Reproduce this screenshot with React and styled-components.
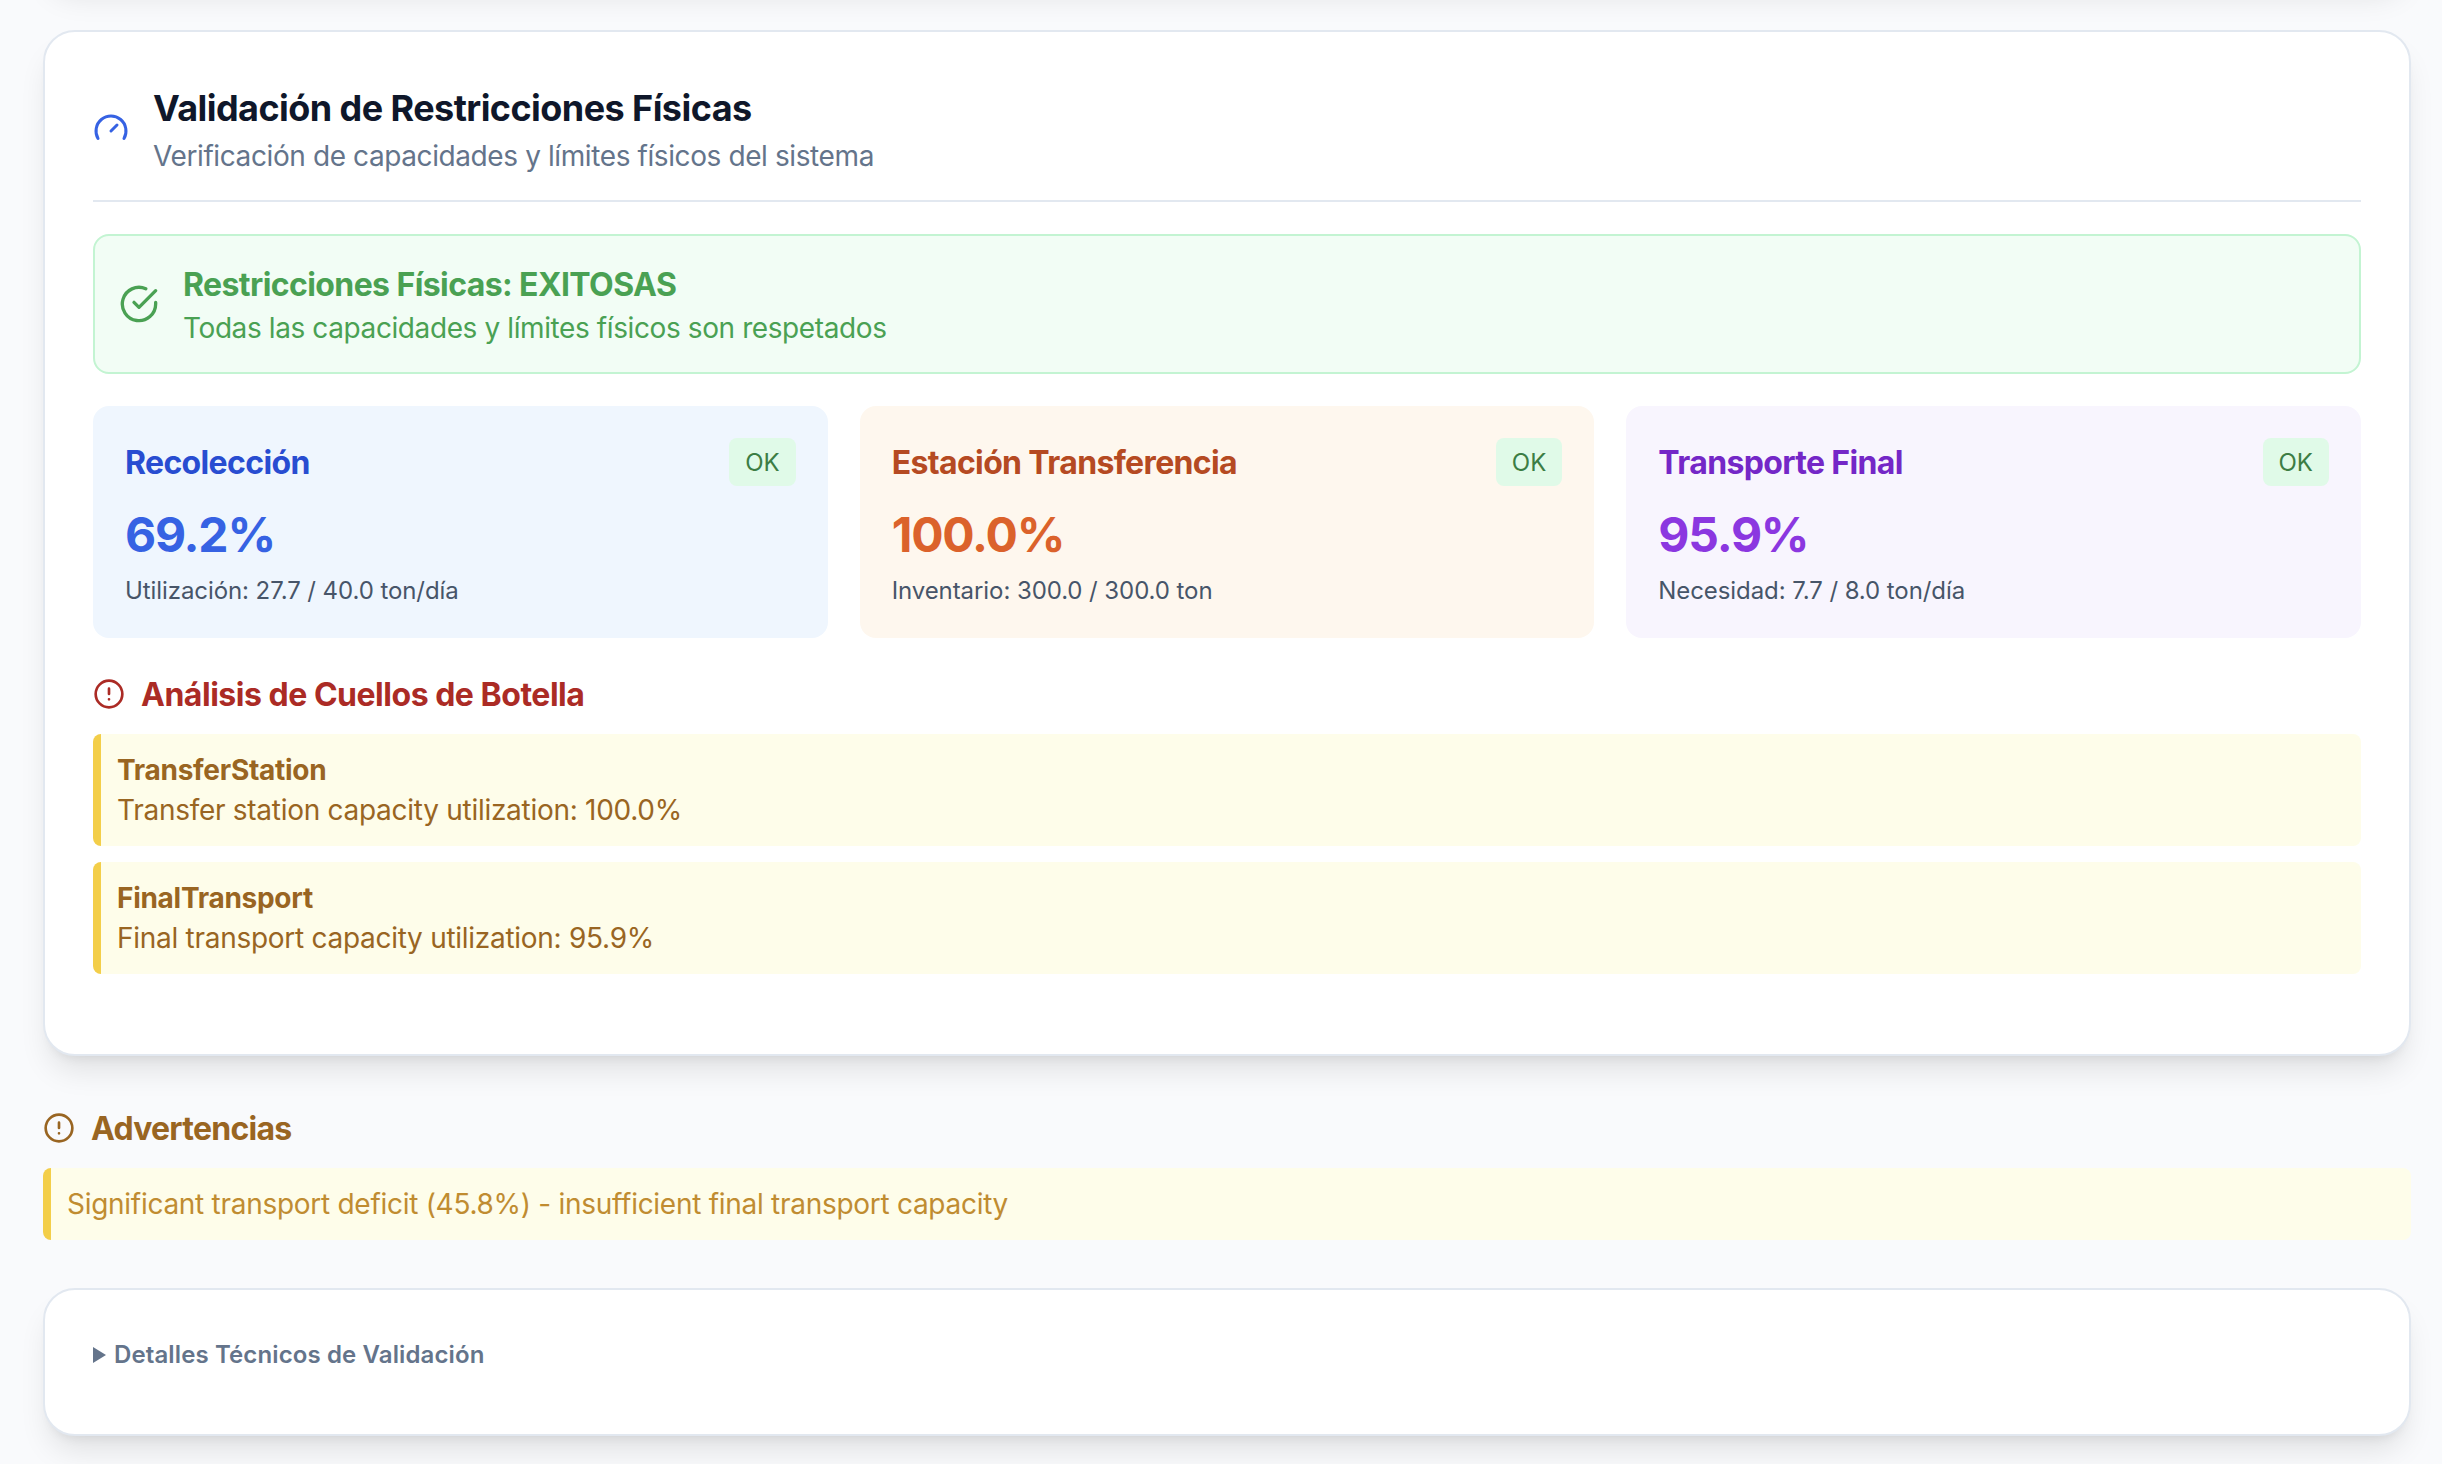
import React from "react";
import styled, { createGlobalStyle } from "styled-components";

const Global = createGlobalStyle`
  *, *::before, *::after { box-sizing: border-box; }
  body { margin: 0; background: #f9fafc; font-family: Inter, "Liberation Sans", sans-serif; overflow: hidden; }
  h2, h3, h4, p { margin: 0; }
  svg { display: block; flex-shrink: 0; }
`;

const Page = styled.main`
  height: 1464px;
  overflow: hidden;
  padding: 0 31px 0 43px;
  display: flex;
  flex-direction: column;
`;

const Card = styled.section`
  flex-shrink: 0;
  height: ${(p) => p.$height}px;
  margin-top: ${(p) => p.$top || 0}px;
  padding: 48px;
  border: 2px solid #e2e8f0;
  border-radius: 32px;
  background: #fff;
  box-shadow: 0 20px 30px -6px rgba(0, 0, 0, 0.1), 0 8px 12px -8px rgba(0, 0, 0, 0.1);
`;

const Header = styled.header`
  display: flex;
  align-items: center;
  gap: 24px;
  height: 122px;
  padding-bottom: 24px;
  border-bottom: 2px solid #e2e8f0;
`;

const Title = styled.h2`
  font-size: 36px;
  line-height: 56px;
  font-weight: 700;
  letter-spacing: -0.56px;
  color: #0f172a;
`;

const Subtitle = styled.p`
  font-size: 28px;
  line-height: 40px;
  letter-spacing: -0.4px;
  color: #64748b;
`;

const Success = styled.div`
  display: flex;
  align-items: center;
  gap: 24px;
  height: 140px;
  margin-top: 32px;
  padding: 0 24px;
  border: 2px solid #c3f4d2;
  border-radius: 16px;
  background: #f2fdf5;
  color: #4aa153;
`;

const SuccessTitle = styled.h3`
  padding-top: 2px;
  font-size: 32px;
  line-height: 46px;
  font-weight: 650;
  letter-spacing: -0.59px;
`;

const SuccessText = styled.p`
  font-size: 28px;
  line-height: 40px;
  letter-spacing: -0.4px;
`;

const Metrics = styled.div`
  display: grid;
  grid-template-columns: repeat(3, 1fr);
  gap: 32px;
  margin-top: 32px;
`;

const Metric = styled.article`
  height: 232px;
  padding: 32px;
  border-radius: 16px;
  background: ${(p) => p.$bg};
`;

const MetricHead = styled.div`
  display: flex;
  align-items: center;
  justify-content: space-between;
  height: 48px;
`;

const MetricName = styled.h4`
  padding-top: 2px;
  font-size: 32px;
  line-height: 46px;
  font-weight: 650;
  letter-spacing: -0.64px;
  color: ${(p) => p.$color};
`;

const Badge = styled.span`
  padding: 9px 16px 7px;
  border-radius: 8px;
  background: #e0fae8;
  color: #3c7d44;
  font-size: 24px;
  line-height: 32px;
`;

const Value = styled.div`
  margin-top: 17px;
  font-size: 48px;
  line-height: 64px;
  font-weight: 700;
  letter-spacing: -1.2px;
  color: ${(p) => p.$color};
`;

const Note = styled.p`
  margin-top: 8px;
  font-size: 24px;
  line-height: 32px;
  letter-spacing: -0.08px;
  color: #475569;
`;

const SectionTitle = styled.h3`
  display: flex;
  align-items: center;
  gap: 16px;
  margin-top: ${(p) => p.$top}px;
  font-size: 32px;
  line-height: 46px;
  font-weight: 650;
  letter-spacing: ${(p) => p.$tracking}px;
  color: ${(p) => p.$color};

  span { padding-top: 2px; }
`;

const Alert = styled.div`
  margin-top: 16px;
  padding: 16px;
  border-left: 8px solid #f3ce49;
  border-radius: 8px;
  background: #fefdea;
  color: ${(p) => p.$color};
  font-size: 28px;
  line-height: 40px;
  letter-spacing: -0.28px;
`;

const AlertTitle = styled.p`
  font-weight: 650;
  letter-spacing: -0.28px;
`;

const Summary = styled.div`
  display: flex;
  align-items: center;
  gap: 8px;
  padding-top: 1px;
  font-size: 24px;
  line-height: 32px;
  font-weight: 600;
  letter-spacing: 0.12px;
  color: #64748b;
`;

const Stroke = ({ size, color = "currentColor", children }) => (
  <svg width={size} height={size} viewBox="0 0 24 24" fill="none" stroke={color} strokeWidth="2" strokeLinecap="round" strokeLinejoin="round">
    {children}
  </svg>
);

const AlertIcon = () => (
  <Stroke size={32}>
    <circle cx="12" cy="12" r="10" />
    <path d="M12 8v4M12 16h.01" />
  </Stroke>
);

const metrics = [
  { name: "Recolección", value: "69.2%", note: "Utilización: 27.7 / 40.0 ton/día", bg: "#eff6fe", dark: "#284dd1", main: "#3662e3" },
  { name: "Estación Transferencia", value: "100.0%", note: "Inventario: 300.0 / 300.0 ton", bg: "#fef7ee", dark: "#b54a22", main: "#db622b" },
  { name: "Transporte Final", value: "95.9%", note: "Necesidad: 7.7 / 8.0 ton/día", bg: "#f8f5fe", dark: "#7427c7", main: "#8b37e0" },
];

const bottlenecks = [
  { name: "TransferStation", text: "Transfer station capacity utilization: 100.0%" },
  { name: "FinalTransport", text: "Final transport capacity utilization: 95.9%" },
];

export default function App() {
  return (
    <>
      <Global />
      <Page>
        <Card $height={200} $top={-218} />
        <Card $height={1026} $top={48}>
          <Header>
            <Stroke size={36} color="#3662e3">
              <path d="m12 14 4-4" />
              <path d="M3.34 19a10 10 0 1 1 17.32 0" />
            </Stroke>
            <div>
              <Title>Validación de Restricciones Físicas</Title>
              <Subtitle>Verificación de capacidades y límites físicos del sistema</Subtitle>
            </div>
          </Header>
          <Success>
            <Stroke size={40}>
              <path d="M22 11.08V12a10 10 0 1 1-5.93-9.14" />
              <path d="m9 11 3 3L22 4" />
            </Stroke>
            <div>
              <SuccessTitle>Restricciones Físicas: EXITOSAS</SuccessTitle>
              <SuccessText>Todas las capacidades y límites físicos son respetados</SuccessText>
            </div>
          </Success>
          <Metrics>
            {metrics.map((m) => (
              <Metric key={m.name} $bg={m.bg}>
                <MetricHead>
                  <MetricName $color={m.dark}>{m.name}</MetricName>
                  <Badge>OK</Badge>
                </MetricHead>
                <Value $color={m.main}>{m.value}</Value>
                <Note>{m.note}</Note>
              </Metric>
            ))}
          </Metrics>
          <SectionTitle $top={32} $tracking={-0.48} $color="#ab2b25">
            <AlertIcon />
            <span>Análisis de Cuellos de Botella</span>
          </SectionTitle>
          {bottlenecks.map((b) => (
            <Alert key={b.name} $color="#996522">
              <AlertTitle>{b.name}</AlertTitle>
              <p>{b.text}</p>
            </Alert>
          ))}
        </Card>
        <SectionTitle $top={48} $tracking={-0.75} $color="#996522">
          <AlertIcon />
          <span>Advertencias</span>
        </SectionTitle>
        <Alert $color="#c08c31">Significant transport deficit (45.8%) - insufficient final transport capacity</Alert>
        <Card $height={148} $top={48}>
          <Summary>
            <svg width="13" height="16" viewBox="0 0 13 16" fill="#64748b">
              <path d="M0 0 13 8 0 16Z" />
            </svg>
            Detalles Técnicos de Validación
          </Summary>
        </Card>
      </Page>
    </>
  );
}
